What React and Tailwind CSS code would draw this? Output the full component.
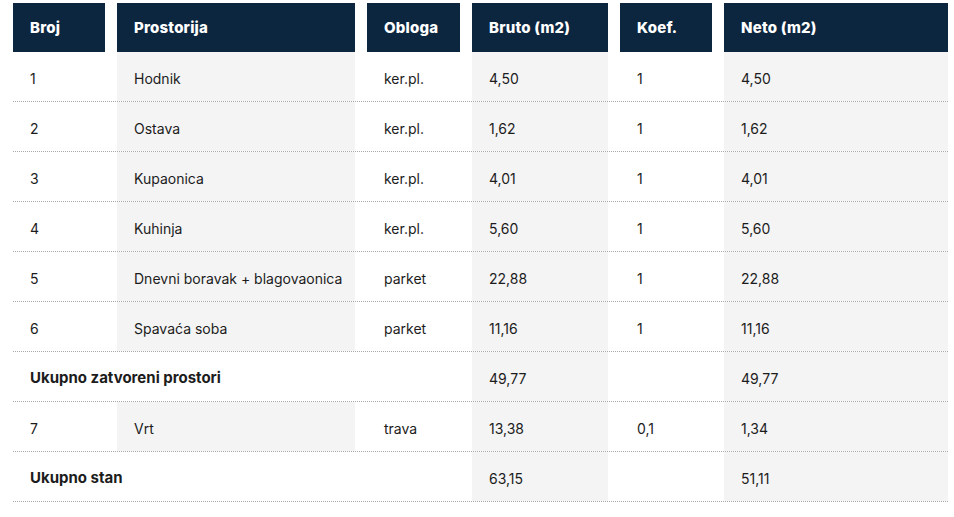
const cols = [
  { w: "w-[92px]", bg: "bg-white" },
  { w: "w-[238px]", bg: "bg-[#f4f4f4]" },
  { w: "w-[93px]", bg: "bg-white" },
  { w: "w-[136px]", bg: "bg-[#f4f4f4]" },
  { w: "w-[92px]", bg: "bg-white" },
  { w: "w-[224px]", bg: "bg-[#f4f4f4]" },
];

const headers = ["Broj", "Prostorija", "Obloga", "Bruto (m2)", "Koef.", "Neto (m2)"];

const rows = [
  ["1", "Hodnik", "ker.pl.", "4,50", "1", "4,50"],
  ["2", "Ostava", "ker.pl.", "1,62", "1", "1,62"],
  ["3", "Kupaonica", "ker.pl.", "4,01", "1", "4,01"],
  ["4", "Kuhinja", "ker.pl.", "5,60", "1", "5,60"],
  ["5", "Dnevni boravak + blagovaonica", "parket", "22,88", "1", "22,88"],
  ["6", "Spavaća soba", "parket", "11,16", "1", "11,16"],
  { total: "Ukupno zatvoreni prostori", bruto: "49,77", neto: "49,77" },
  ["7", "Vrt", "trava", "13,38", "0,1", "1,34"],
  { total: "Ukupno stan", bruto: "63,15", neto: "51,11" },
];

const Row = ({ children }) => (
  <div className="flex gap-3 h-[50px] border-b border-dotted border-[#a8a8a8]">{children}</div>
);

const Cell = ({ i, children }) => (
  <div className={`${cols[i].w} ${cols[i].bg} h-full flex items-center pl-[17px] pt-[3px]`}>{children}</div>
);

const App = () => {
  return (
    <div
      className="w-[954px] h-[517px] bg-white pt-[3px] pl-[13px] text-[14px] text-[#1c1c1c]"
      style={{ fontFamily: "Inter, 'Noto Sans', sans-serif" }}
    >
      <div className="flex gap-3 h-[49px]">
        {headers.map((h, i) => (
          <div
            key={h}
            className={`${cols[i].w} bg-[#0c2640] text-white font-extrabold text-[15px] tracking-[0.2px] flex items-center pl-[17px] pt-[2px]`}
          >
            {h}
          </div>
        ))}
      </div>

      <div className="w-[935px]">
        {rows.map((r, idx) =>
          Array.isArray(r) ? (
            <Row key={idx}>
              {r.map((v, i) => (
                <Cell key={i} i={i}>{v}</Cell>
              ))}
            </Row>
          ) : (
            <Row key={idx}>
              <div className="w-[447px] h-full flex items-center pl-[17px] pt-[3px] font-bold text-[15px]">{r.total}</div>
              <Cell i={3}>{r.bruto}</Cell>
              <Cell i={4}></Cell>
              <Cell i={5}>{r.neto}</Cell>
            </Row>
          )
        )}
      </div>
    </div>
  );
};

export default App;
